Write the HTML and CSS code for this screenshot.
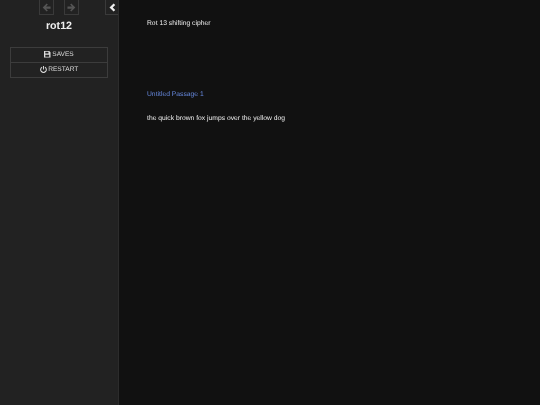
FILE: index.html
```html
<!DOCTYPE html>
<html lang="en">

<head>
    <meta charset="UTF-8">
    <title>rot12</title>
    <link rel="stylesheet" href="styles.css">
</head>

<body>
    <div class="ui-bar">
        <div class="bar-top">
            <div class="history">
                <button class="nav-btn">
                    <svg width="9" height="9" viewBox="0 0 8 8"><path d="M4.2 .4 5.2 1.4 3.6 3H7.6V5H3.6L5.2 6.6 4.2 7.6.6 4Z" /></svg>
                </button>
                <button class="nav-btn">
                    <svg width="9" height="9" viewBox="0 0 8 8"><path d="M3.8 .4 2.8 1.4 4.4 3H.4V5H4.4L2.8 6.6 3.8 7.6 7.4 4Z" /></svg>
                </button>
            </div>
            <button class="toggle">
                <svg width="7" height="9" viewBox="0 0 7 9"><path d="M4.6 .4 6.2 2 3.7 4.5 6.2 7 4.6 8.6.5 4.5Z" /></svg>
            </button>
        </div>
        <h1 class="story-title">rot12</h1>
        <div class="menu">
            <a class="menu-item">
                <svg width="6.5" height="6.5" viewBox="0 0 7 7"><path d="M0 0H5.6L7 1.4V7H0ZM1.4 .8V2.6H4.8V.8ZM1.4 4V6.2H5.6V4Z" /></svg>
                <span class="menu-label">SAVES</span>
            </a>
            <a class="menu-item">
                <svg width="7" height="7" viewBox="0 0 7 7.4"><path d="M3 0H4V3.6H3Z" /><path d="M2 1.2A3 3 0 1 0 5 1.2" fill="none" stroke="currentColor" stroke-width="1.1" /></svg>
                <span class="menu-label">RESTART</span>
            </a>
        </div>
    </div>
    <div class="passages">
        <p class="intro">Rot 13 shifting cipher</p>
        <a class="link">Untitled Passage 1</a>
        <p class="sentence">the quick brown fox jumps over the yellow dog</p>
    </div>
</body>

</html>
```

FILE: styles.css
```css
* {
    margin: 0;
    padding: 0;
    box-sizing: border-box;
}

html,
body {
    height: 100%;
}

body {
    display: flex;
    background-color: #111;
    color: #eee;
    font-family: "Liberation Sans", Arial, sans-serif;
    font-size: 6.75px;
    text-rendering: geometricPrecision;
    overflow: hidden;
}

.ui-bar {
    width: 119px;
    flex-shrink: 0;
    background-color: #222;
    border-right: 1px solid #2c2c2c;
}

.bar-top {
    display: flex;
    height: 15px;
}

.history {
    display: flex;
    gap: 10px;
    margin-left: 39px;
}

.nav-btn,
.toggle {
    display: flex;
    justify-content: center;
    align-items: center;
    width: 15px;
    height: 15px;
    background: none;
    border: 1px solid #3a3a3a;
    border-top: 0;
}

.nav-btn svg {
    fill: #555;
}

.toggle {
    width: 13px;
    margin-left: 26px;
    border-right: 0;
}

.toggle svg {
    fill: #eee;
}

/* slightly soft text, the picture is a scaled down screenshot */
.story-title,
.menu-label,
.passages {
    filter: blur(.25px);
}

.story-title {
    margin-top: 4px;
    font-size: 10.7px;
    line-height: 14px;
    font-weight: bold;
    text-align: center;
}

.menu {
    margin: 14px 10px 0 10px;
    border: 1px solid #3c3c3c;
}

.menu-item {
    display: flex;
    justify-content: center;
    align-items: center;
    gap: 1.5px;
    height: 14px;
    padding-bottom: 1px;
    color: #ddd;
    font-size: 6.6px;
}

.menu-item + .menu-item {
    height: 15px;
    border-top: 1px solid #3c3c3c;
}

.menu-item svg {
    fill: currentColor;
}

.passages {
    flex: 1;
    padding: 19px 0 0 28px;
    line-height: 9px;
}

.intro {
    margin-bottom: 62px;
}

.link {
    display: block;
    color: #68d;
    margin-bottom: 15px;
}
```
